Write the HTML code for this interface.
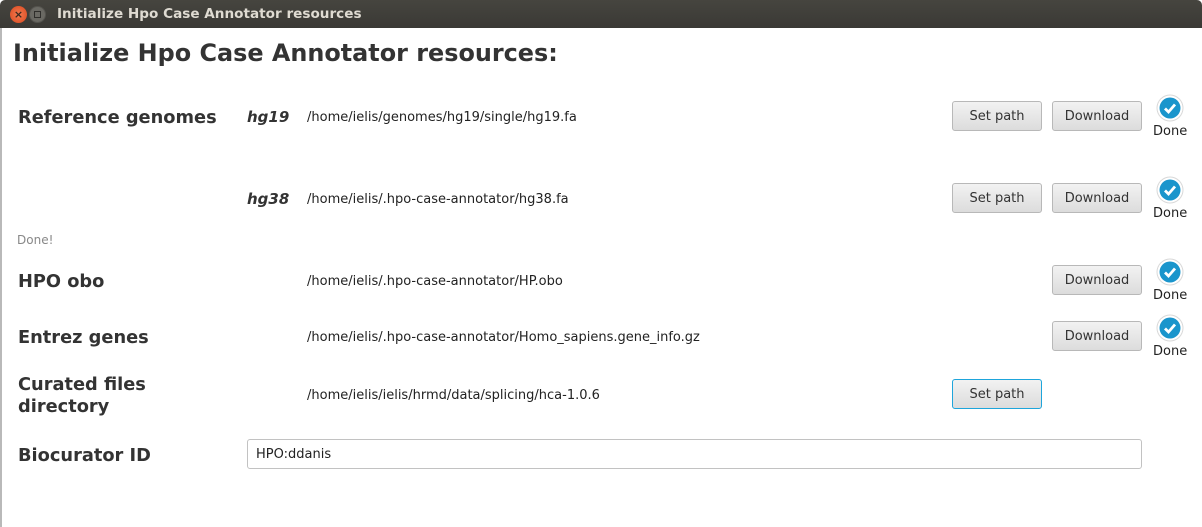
<!DOCTYPE html>
<html><head><style>
*{margin:0;padding:0;box-sizing:border-box}
body{width:1202px;height:527px;overflow:hidden;background:#fff;font-family:"DejaVu Sans","Liberation Sans",sans-serif;color:#333;position:relative}
.a{position:absolute;white-space:nowrap}
.tb{position:absolute;left:0;top:0;width:1202px;height:28px;background:linear-gradient(#46453f,#3a3935);border-radius:5px 5px 0 0}
.lb{font-weight:bold;font-size:17.8px;color:#333}
.p{font-size:13px;color:#222}
.btn{position:absolute;height:30px;border:1px solid #b8b8b8;border-radius:3px;background:linear-gradient(#f2f2f2,#dcdcdc);font-size:13px;color:#333;text-align:center;line-height:30px}
.chk{position:absolute;width:28px;height:28px}
.done{font-size:13px;color:#222}
</style></head><body>
<div class="tb"></div>
<div class="a" style="left:10px;top:6px;width:17px;height:17px;border-radius:50%;background:radial-gradient(#f47a50,#d8481e);color:#3a2a20;font-size:11px;line-height:17px;text-align:center;font-weight:bold">×</div>
<div class="a" style="left:29px;top:6px;width:17px;height:17px;border-radius:50%;background:#6a6963;border:1px solid #55544f"><div style="position:absolute;left:4px;top:4px;width:7px;height:7px;border:1px solid #2f2e2b"></div></div>
<div class="a" style="left:57px;top:6px;font-size:13.6px;font-weight:bold;color:#dfdbd2">Initialize Hpo Case Annotator resources</div>
<div class="a" style="left:0;top:28px;width:2px;height:499px;background:#b9b9b9"></div>
<div class="a" style="left:13px;top:39px;font-size:23.9px;font-weight:bold;color:#333">Initialize Hpo Case Annotator resources:</div>

<div class="a lb" style="left:18px;top:107px">Reference genomes</div>
<div class="a" style="left:247px;top:108px;font-size:15px;font-weight:bold;font-style:italic">hg19</div>
<div class="a p" style="left:307px;top:110px">/home/ielis/genomes/hg19/single/hg19.fa</div>
<div class="btn" style="left:952px;top:101px;width:90px">Set path</div>
<div class="btn" style="left:1052px;top:101px;width:90px">Download</div>

<div class="a" style="left:247px;top:190px;font-size:15px;font-weight:bold;font-style:italic">hg38</div>
<div class="a p" style="left:307px;top:192px">/home/ielis/.hpo-case-annotator/hg38.fa</div>
<div class="btn" style="left:952px;top:183px;width:90px">Set path</div>
<div class="btn" style="left:1052px;top:183px;width:90px">Download</div>

<div class="a" style="left:17px;top:233px;font-size:12px;color:#888">Done!</div>

<div class="a lb" style="left:18px;top:271px">HPO obo</div>
<div class="a p" style="left:307px;top:274px">/home/ielis/.hpo-case-annotator/HP.obo</div>
<div class="btn" style="left:1052px;top:265px;width:90px">Download</div>

<div class="a lb" style="left:18px;top:327px">Entrez genes</div>
<div class="a p" style="left:307px;top:330px">/home/ielis/.hpo-case-annotator/Homo_sapiens.gene_info.gz</div>
<div class="btn" style="left:1052px;top:321px;width:90px">Download</div>

<div class="a lb" style="left:18px;top:374px;line-height:22px">Curated files<br>directory</div>
<div class="a p" style="left:307px;top:388px">/home/ielis/ielis/hrmd/data/splicing/hca-1.0.6</div>
<div class="btn" style="left:952px;top:379px;width:90px;border-color:#1ea5db">Set path</div>

<div class="a lb" style="left:18px;top:445px">Biocurator ID</div>
<div class="a" style="left:247px;top:439px;width:895px;height:30px;border:1px solid #c2c2c2;border-radius:3px;background:#fff;font-size:13px;line-height:30px;padding-left:8px;color:#222">HPO:ddanis</div>

<svg class="chk" style="left:1156px;top:94px" viewBox="0 0 28 28"><circle cx="14" cy="14" r="13.5" fill="#d8d8d8"/><circle cx="14" cy="14" r="12.5" fill="#fff"/><circle cx="14" cy="14" r="10.5" fill="#1a95cc"/><path d="M9 14.5l3.5 3.5 6.5-7.5" stroke="#fff" stroke-width="2.8" fill="none"/></svg>
<div class="a done" style="left:1153px;top:124px">Done</div>
<svg class="chk" style="left:1156px;top:176px" viewBox="0 0 28 28"><circle cx="14" cy="14" r="13.5" fill="#d8d8d8"/><circle cx="14" cy="14" r="12.5" fill="#fff"/><circle cx="14" cy="14" r="10.5" fill="#1a95cc"/><path d="M9 14.5l3.5 3.5 6.5-7.5" stroke="#fff" stroke-width="2.8" fill="none"/></svg>
<div class="a done" style="left:1153px;top:206px">Done</div>
<svg class="chk" style="left:1156px;top:258px" viewBox="0 0 28 28"><circle cx="14" cy="14" r="13.5" fill="#d8d8d8"/><circle cx="14" cy="14" r="12.5" fill="#fff"/><circle cx="14" cy="14" r="10.5" fill="#1a95cc"/><path d="M9 14.5l3.5 3.5 6.5-7.5" stroke="#fff" stroke-width="2.8" fill="none"/></svg>
<div class="a done" style="left:1153px;top:288px">Done</div>
<svg class="chk" style="left:1156px;top:314px" viewBox="0 0 28 28"><circle cx="14" cy="14" r="13.5" fill="#d8d8d8"/><circle cx="14" cy="14" r="12.5" fill="#fff"/><circle cx="14" cy="14" r="10.5" fill="#1a95cc"/><path d="M9 14.5l3.5 3.5 6.5-7.5" stroke="#fff" stroke-width="2.8" fill="none"/></svg>
<div class="a done" style="left:1153px;top:344px">Done</div>
</body></html>
